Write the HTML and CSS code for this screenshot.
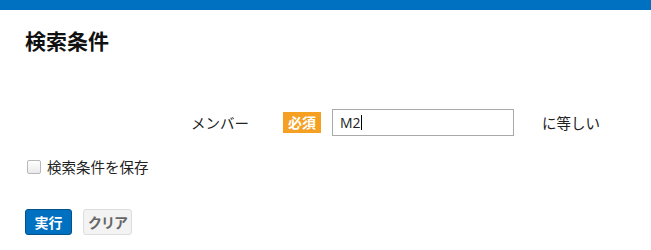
FILE: index.html
```html
<!DOCTYPE html>
<html lang="ja">
<head>
<meta charset="utf-8">
<link rel="stylesheet" href="styles.css">
</head>
<body>
<div class="topbar"></div>
<main class="page">
  <h1 class="title">検索条件</h1>
  <div class="cond-row">
    <div class="cond-label">メンバー</div>
    <span class="badge">必須</span>
    <div class="input"><span class="input-text">M2</span><span class="caret"></span></div>
    <div class="cond-op">に等しい</div>
  </div>
  <label class="save">
    <span class="checkbox"></span>
    <span class="save-text">検索条件を保存</span>
  </label>
  <div class="actions">
    <button class="btn btn-primary">実行</button>
    <button class="btn btn-clear">クリア</button>
  </div>
</main>
</body>
</html>
```

FILE: styles.css
```css
html, body {
  margin: 0;
  padding: 0;
  background: #ffffff;
}
body {
  font-family: "Noto Sans CJK JP", "Noto Sans", sans-serif;
  color: #222222;
  font-size: 14.5px;
}
.topbar {
  height: 10px;
  background: #0070c0;
}
.page {
  display: flex;
  flex-direction: column;
  align-items: flex-start;
}
.title {
  margin: 16px 0 0 25px;
  font-size: 21px;
  line-height: 28px;
  font-weight: bold;
  color: #111111;
}
.cond-row {
  margin-top: 55px;
  display: flex;
  align-items: center;
  height: 27px;
}
.cond-label {
  width: 249px;
  text-align: right;
  line-height: 20px;
}
.badge {
  margin-left: 34px;
  width: 38px;
  height: 21px;
  background: #f5a023;
  color: #ffffff;
  font-size: 14px;
  font-weight: bold;
  line-height: 21px;
  text-align: center;
}
.input {
  margin-left: 11px;
  border: 1px solid #a9a9a9;
  display: flex;
  align-items: center;
  padding-left: 7px;
  box-sizing: border-box;
  width: 182px;
  height: 27px;
  font-family: "Open Sans", "Noto Sans", sans-serif;
  font-size: 14px;
  color: #222222;
}
.caret {
  display: inline-block;
  width: 1px;
  height: 15px;
  background: #000000;
}
.cond-op {
  margin-left: 28px;
  line-height: 20px;
}
.save {
  margin: 21px 0 0 27px;
  display: flex;
  align-items: center;
  gap: 6px;
}
.checkbox {
  box-sizing: border-box;
  width: 14px;
  height: 14px;
  border: 1px solid #b8b8b8;
  border-radius: 2px;
  background: linear-gradient(#ffffff, #eaeaea);
}
.save-text {
  line-height: 20px;
}
.actions {
  margin: 32px 0 0 25px;
  display: flex;
  gap: 11px;
}
.btn {
  box-sizing: border-box;
  height: 26px;
  padding: 0;
  white-space: nowrap;
  font-family: "Noto Sans CJK JP", sans-serif;
  font-size: 14px;
  font-weight: bold;
  line-height: 22px;
  border-radius: 3px;
}
.btn-primary {
  width: 47px;
  background: #0070c0;
  border: 1px solid #04528a;
  color: #ffffff;
}
.btn-clear {
  width: 49px;
  background: #f3f3f3;
  border: 1px solid #dddddd;
  color: #666666;
  letter-spacing: -1px;
}
```
